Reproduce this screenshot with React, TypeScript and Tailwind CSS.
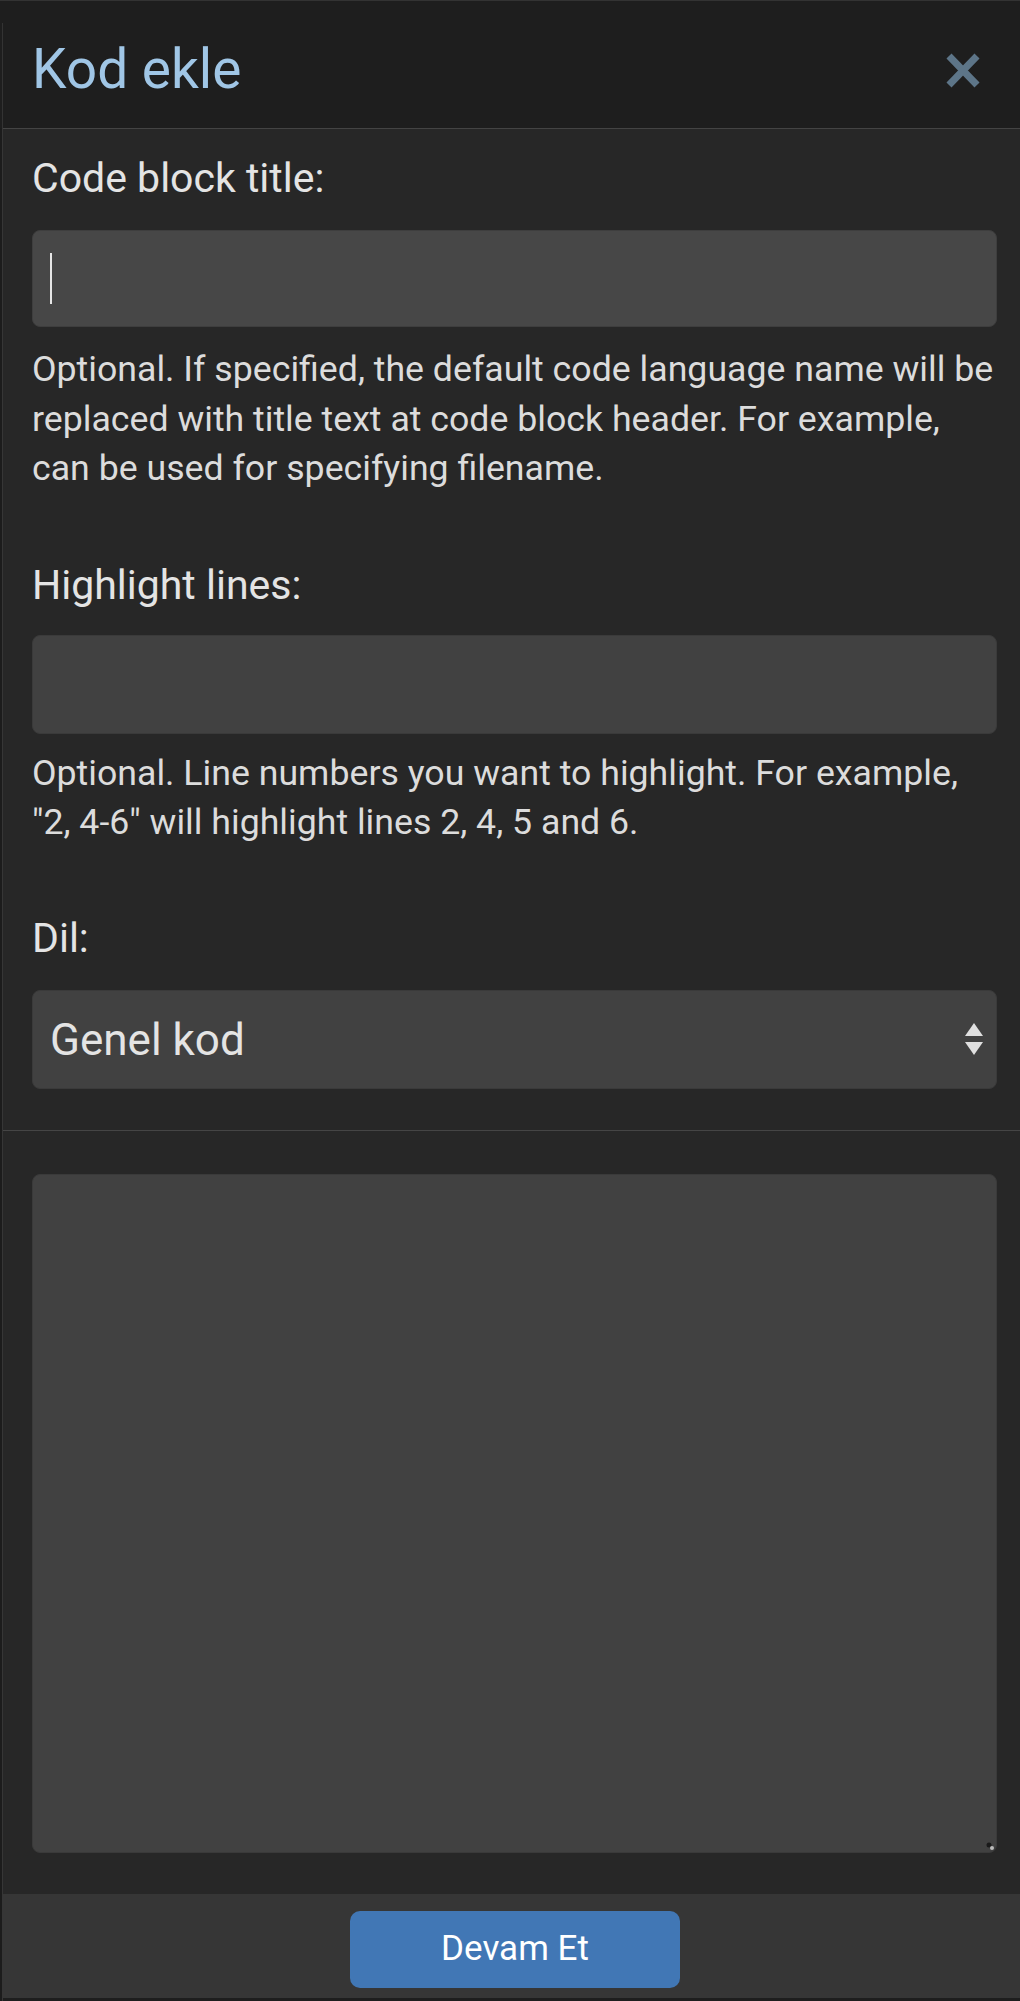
import React from "react";

export default function App() {
  return (
    <div className="w-[1020px] h-[2001px] bg-[#1c1c1c] flex flex-col font-['Roboto',sans-serif] overflow-hidden">
      <div className="h-px bg-[#333333]" />
      {/* Header */}
      <div className="flex h-[127px] bg-[#1e1e1e]">
        <div className="w-[2px]" />
        <div className="w-px mt-[22px] bg-[#333333]" />
        <div className="flex-1 flex justify-between pl-[29px] pr-[39px] pt-[36px]">
          <div className="text-[55px] leading-[64px] text-[#a0c6e6]">Kod ekle</div>
          <svg width="36" height="35" viewBox="0 0 36 35" className="mt-[16px]">
            <path d="M4 3 L32 32 M32 3 L4 32" stroke="#5d7588" strokeWidth="7" />
          </svg>
        </div>
      </div>
      <div className="flex-1 flex">
        <div className="w-[2px]" />
        <div className="flex-1 flex flex-col border-l border-[#363636]">
          <div className="h-px bg-[#444444]" />
          {/* Body */}
          <div className="bg-[#272727] flex flex-col pl-[29px] pr-[23px] pt-[21px]">
            <div className="text-[41px] leading-[56px] text-[#e4e4e4]">Code block title:</div>
            <div className="mt-[24px] h-[97px] rounded-[8px] bg-[#474747] border border-[#3e3e3e] flex items-center pl-[17px]">
              <div className="w-[2px] h-[51px] bg-[#e6e6e6]" />
            </div>
            <div className="mt-[18px] text-[35.7px] leading-[49.5px] text-[#dcdcdc]">
              Optional. If specified, the default code language name will be replaced with title text at code block header. For example, can be used for specifying filename.
            </div>
            <div className="mt-[63px] text-[41px] leading-[56px] text-[#e4e4e4]">Highlight lines:</div>
            <div className="mt-[22px] h-[99px] rounded-[8px] bg-[#414141] border border-[#3a3a3a]" />
            <div className="mt-[15px] text-[35.7px] leading-[49.5px] text-[#dcdcdc]">
              Optional. Line numbers you want to highlight. For example, "2, 4-6" will highlight lines 2, 4, 5 and 6.
            </div>
            <div className="mt-[62px] text-[41px] leading-[56px] text-[#e4e4e4]">Dil:</div>
            <div className="mt-[24px] h-[99px] rounded-[8px] bg-[#414141] border border-[#3a3a3a] flex items-center justify-between pl-[17px] pr-[13px]">
              <div className="text-[44px] leading-[52px] text-[#e4e4e4] mt-[2px]">Genel kod</div>
              <svg width="18" height="33" viewBox="0 0 18 33">
                <path d="M9 0 L18 13 L0 13 Z" fill="#e0e0e0" />
                <path d="M0 19 L18 19 L9 32 Z" fill="#e0e0e0" />
              </svg>
            </div>
            <div className="h-[41px]" />
          </div>
          <div className="h-px bg-[#454545]" />
          <div className="flex-1 bg-[#272727] flex flex-col pl-[29px] pr-[23px] pt-[43px] pb-[41px]">
            <div className="flex-1 rounded-[8px] bg-[#414141] border border-[#3a3a3a] flex items-end justify-end p-[2px]">
              <svg width="8" height="8" viewBox="0 0 8 8">
                <circle cx="3" cy="3" r="2.5" fill="#1a1a1a" />
                <circle cx="6" cy="6" r="2" fill="#bbbbbb" />
              </svg>
            </div>
          </div>
          {/* Footer */}
          <div className="h-[104px] bg-[#363636] flex pl-[347px] pt-[17px]">
            <div className="w-[330px] h-[77px] rounded-[10px] bg-[#4177b5] flex items-center justify-center text-[35px] text-white">
              Devam Et
            </div>
          </div>
          <div className="h-[3px] bg-[#1e1e1e]" />
        </div>
      </div>
    </div>
  );
}
